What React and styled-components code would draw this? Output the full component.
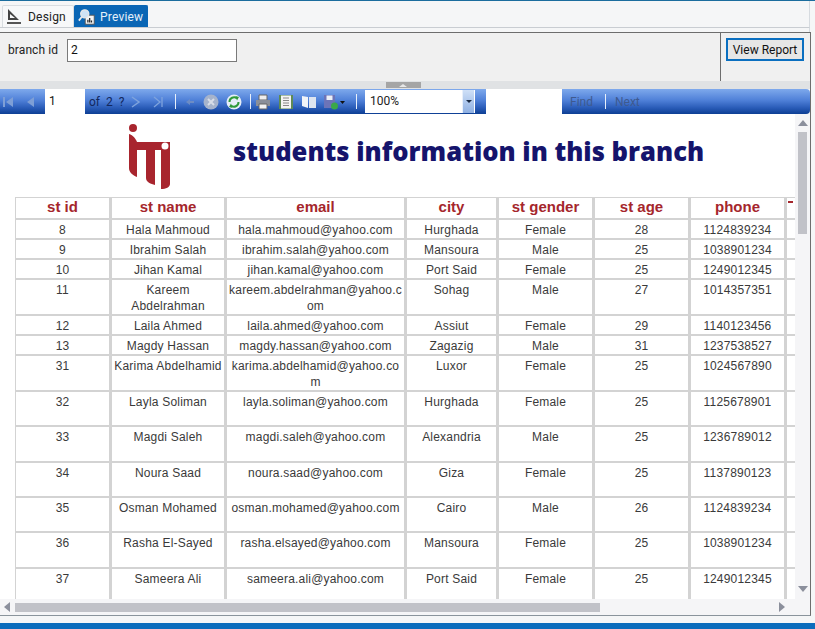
import React from "react";
import styled, { createGlobalStyle } from "styled-components";

const GlobalStyle = createGlobalStyle`
  html, body {
    margin: 0;
    padding: 0;
    background: #f5f6f7;
    overflow: hidden;
  }
`;

const columns = [95, 115, 180, 92, 96, 96, 96, 40];
const headers = ["st id", "st name", "email", "city", "st gender", "st age", "phone"];

const students = [
  { id: 8, name: "Hala Mahmoud", email: "hala.mahmoud@yahoo.com", city: "Hurghada", gender: "Female", age: 28, phone: "1124839234", h: 20 },
  { id: 9, name: "Ibrahim Salah", email: "ibrahim.salah@yahoo.com", city: "Mansoura", gender: "Male", age: 25, phone: "1038901234", h: 20 },
  { id: 10, name: "Jihan Kamal", email: "jihan.kamal@yahoo.com", city: "Port Said", gender: "Female", age: 25, phone: "1249012345", h: 20 },
  { id: 11, name: "Kareem Abdelrahman", email: "kareem.abdelrahman@yahoo.com", city: "Sohag", gender: "Male", age: 27, phone: "1014357351", h: 36 },
  { id: 12, name: "Laila Ahmed", email: "laila.ahmed@yahoo.com", city: "Assiut", gender: "Female", age: 29, phone: "1140123456", h: 20 },
  { id: 13, name: "Magdy Hassan", email: "magdy.hassan@yahoo.com", city: "Zagazig", gender: "Male", age: 31, phone: "1237538527", h: 20 },
  { id: 31, name: "Karima Abdelhamid", email: "karima.abdelhamid@yahoo.com", city: "Luxor", gender: "Female", age: 25, phone: "1024567890", h: 36 },
  { id: 32, name: "Layla Soliman", email: "layla.soliman@yahoo.com", city: "Hurghada", gender: "Female", age: 25, phone: "1125678901", h: 35 },
  { id: 33, name: "Magdi Saleh", email: "magdi.saleh@yahoo.com", city: "Alexandria", gender: "Male", age: 25, phone: "1236789012", h: 36 },
  { id: 34, name: "Noura Saad", email: "noura.saad@yahoo.com", city: "Giza", gender: "Female", age: 25, phone: "1137890123", h: 35 },
  { id: 35, name: "Osman Mohamed", email: "osman.mohamed@yahoo.com", city: "Cairo", gender: "Male", age: 26, phone: "1124839234", h: 35 },
  { id: 36, name: "Rasha El-Sayed", email: "rasha.elsayed@yahoo.com", city: "Mansoura", gender: "Female", age: 25, phone: "1038901234", h: 36 },
  { id: 37, name: "Sameera Ali", email: "sameera.ali@yahoo.com", city: "Port Said", gender: "Female", age: 25, phone: "1249012345", h: 36 },
];

const Page = styled.div`
  width: 815px;
  height: 629px;
  display: flex;
  flex-direction: column;
  overflow: hidden;
  background: #f5f6f7;
  font-family: Roboto, "Noto Sans", sans-serif;
  border-top: 1px solid #1b6d9e;
  box-sizing: border-box;
`;

const TabStrip = styled.div`
  height: 27px;
  width: 810px;
  flex: none;
  display: flex;
  align-items: flex-start;
  padding: 4px 0 0 2px;
  box-sizing: border-box;
  border-bottom: 1px solid #c9cdd2;
  border-right: 1px solid #d6dbe0;
`;

const Tab = styled.div`
  height: 22px;
  width: ${props => props.width}px;
  display: flex;
  align-items: center;
  gap: ${props => (props.active ? 4 : 6)}px;
  padding-left: 3px;
  box-sizing: border-box;
  font-size: 12px;
  letter-spacing: 0.2px;
  border-radius: 2px 2px 0 0;
  color: ${props => (props.active ? "#e4f0fa" : "#222")};
  background: ${props => (props.active ? "#0a66b5" : "#f7f8f9")};
  border: 1px solid ${props => (props.active ? "#0a66b5" : "#d9dde1")};
  border-bottom: none;
`;

const Gap = styled.div`
  height: 4px;
  width: 810px;
  flex: none;
  border-right: 1px solid #d6dbe0;
  box-sizing: border-box;
`;

const Frame = styled.div`
  width: 811px;
  height: 584px;
  flex: none;
  display: flex;
  flex-direction: column;
  border-top: 1px solid #6d6d6d;
  border-right: 1px solid #6d6d6d;
  border-bottom: 1px solid #8a949c;
  box-sizing: border-box;
`;

const ParamPanel = styled.div`
  height: 48px;
  flex: none;
  display: flex;
  background: #f0f0f0;
`;

const ParamFields = styled.div`
  flex: 1;
  display: flex;
  align-items: flex-start;
  gap: 9px;
  padding: 6px 0 0 8px;
`;

const ParamLabel = styled.span`
  font-size: 12px;
  letter-spacing: 0.1px;
  color: #222;
  line-height: 23px;
  width: 50px;
  white-space: nowrap;
`;

const ParamInput = styled.div`
  width: 170px;
  height: 23px;
  box-sizing: border-box;
  border: 1px solid #7a7a7a;
  background: #fff;
  font-size: 12px;
  color: #111;
  padding-left: 3px;
  line-height: 20px;
`;

const ParamAction = styled.div`
  width: 90px;
  flex: none;
  box-sizing: border-box;
  border-left: 1px solid #6d6d6d;
  padding: 5px 0 0 5px;
`;

const ViewButton = styled.button`
  width: 78px;
  height: 23px;
  padding: 0;
  box-sizing: border-box;
  border: 2px solid #0a6fc0;
  background: #e6e6e6;
  font-family: inherit;
  font-size: 12px;
  color: #111;
`;

const Splitter = styled.div`
  height: 8px;
  flex: none;
  background: #e0e2e4;
  display: flex;
  justify-content: center;
  box-sizing: border-box;
`;

const Grip = styled.div`
  width: 35px;
  height: 6px;
  margin: 1px 0 0 -4px;
  background: #a5a5a5;
  display: flex;
  justify-content: center;
  align-items: center;
  &::before {
    content: "";
    border-left: 4px solid transparent;
    border-right: 4px solid transparent;
    border-bottom: 3px solid #e8e8e8;
  }
`;

const Toolbar = styled.div`
  height: 25px;
  flex: none;
  display: flex;
  align-items: center;
  border-radius: 0 4px 4px 0;
  background: linear-gradient(#7ea9ec 0%, #4f80d8 45%, #2a5cb8 75%, #0d3f94 100%);
`;

const ToolIcon = styled.svg`
  width: ${props => props.w || 16}px;
  height: 16px;
  flex: none;
  margin-left: ${props => props.left || 0}px;
`;

const PageInput = styled.div`
  width: 40px;
  height: 25px;
  flex: none;
  margin-left: ${props => props.left || 0}px;
  box-sizing: border-box;
  background: #fff;
  font-size: 12px;
  line-height: 24px;
  padding-left: 4px;
  color: #111;
`;

const PageOf = styled.span`
  font-size: 12px;
  color: #12285e;
  margin-left: 4px;
  width: 41px;
  flex: none;
  word-spacing: 3px;
`;

const Divider = styled.div`
  width: 1px;
  height: 15px;
  flex: none;
  background: #e8f0fb;
  margin-left: ${props => props.left || 0}px;
`;

const ZoomBox = styled.div`
  width: 110px;
  height: 23px;
  flex: none;
  margin-left: 8px;
  display: flex;
  justify-content: space-between;
  background: #fff;
  box-sizing: border-box;
  font-size: 12px;
  line-height: 23px;
  color: #222;
  padding: 0 1px 0 5px;
`;

const ZoomArrow = styled.div`
  width: 11px;
  background: linear-gradient(#cfe0f7, #8fb0e2);
  border-left: 1px solid #e8f0fb;
  display: flex;
  align-items: center;
  justify-content: center;
  &::before {
    content: "";
    border-left: 3px solid transparent;
    border-right: 3px solid transparent;
    border-top: 3px solid #1a2a44;
  }
`;

const FindInput = styled.div`
  width: 76px;
  height: 25px;
  flex: none;
  margin-left: 11px;
  background: #fff;
`;

const FindLink = styled.span`
  font-size: 12px;
  color: #3f5a8f;
  margin-left: ${props => props.left || 0}px;
  flex: none;
`;

const ReportArea = styled.div`
  flex: 1;
  min-height: 0;
  display: grid;
  grid-template-columns: 795px 1fr;
  grid-template-rows: 1fr 16px;
  background: #fff;
`;

const ReportBody = styled.div`
  overflow: hidden;
  min-height: 0;
`;

const ReportHead = styled.div`
  height: 83px;
  display: flex;
  align-items: flex-start;
  padding: 9px 0 0 128px;
  box-sizing: border-box;
`;

const ReportTitle = styled.h1`
  margin: 9px 0 0 61px;
  font-family: "Open Sans", "Noto Sans", sans-serif;
  font-size: 25.6px;
  line-height: 40px;
  font-weight: 800;
  color: #15146c;
  white-space: nowrap;
`;

const TableClip = styled.div`
  margin-left: 15px;
  width: 780px;
  overflow: hidden;
`;

const StudentTable = styled.table`
  border-collapse: separate;
  border-spacing: 0;
  table-layout: fixed;
  width: 810px;
  font-family: "Liberation Sans", Arial, sans-serif;
`;

const HeadCell = styled.th`
  height: 23px;
  box-sizing: border-box;
  padding: 0;
  font-size: 15px;
  line-height: 18px;
  font-weight: 700;
  color: #a5262c;
  text-align: center;
  vertical-align: top;
  border-top: 1px solid #d3d3d3;
  border-left: 2px solid #d3d3d3;
  border-right: 1px solid #d3d3d3;
  border-bottom: 2px solid #d3d3d3;
  overflow: hidden;
  &:first-child {
    border-left-width: 1px;
  }
`;

const CutHeader = styled.th`
  height: 23px;
  box-sizing: border-box;
  padding: 3px 0 0 1px;
  vertical-align: top;
  text-align: left;
  border-top: 1px solid #d3d3d3;
  border-left: 2px solid #d3d3d3;
  border-bottom: 2px solid #d3d3d3;
  &::before {
    content: "";
    display: block;
    width: 5px;
    height: 2px;
    background: #a5262c;
  }
`;

const Cell = styled.td`
  box-sizing: border-box;
  padding: 2px 0 0;
  font-size: 12px;
  line-height: 16px;
  letter-spacing: 0.2px;
  color: #3a3a3a;
  text-align: center;
  vertical-align: top;
  overflow-wrap: anywhere;
  border-left: 2px solid #d3d3d3;
  border-right: 1px solid #d3d3d3;
  border-bottom: 2px solid #d3d3d3;
  &:first-child {
    border-left-width: 1px;
  }
`;

const VScroll = styled.div`
  background: #f5f5f7;
  display: flex;
  flex-direction: column;
  align-items: center;
  padding: 6px 0 7px;
  box-sizing: border-box;
  min-height: 0;
`;

const HScroll = styled.div`
  background: #f5f5f7;
  display: flex;
  align-items: center;
  grid-column: 1 / -1;
`;

const Arrow = styled.div`
  width: 0;
  height: 0;
  flex: none;
  border: 5px solid transparent;
  ${props => props.dir === "up" && "border-top: none; border-bottom: 6px solid #8b8f9c;"}
  ${props => props.dir === "down" && "border-bottom: none; border-top: 6px solid #8b8f9c; margin-top: auto;"}
  ${props => props.dir === "left" && "border-left: none; border-right: 6px solid #8b8f9c; margin-left: 4px;"}
  ${props => props.dir === "right" && "border-right: none; border-left: 6px solid #8b8f9c; margin-left: 179px;"}
`;

const VThumb = styled.div`
  width: 9px;
  height: 102px;
  margin-top: 6px;
  flex: none;
  background: #c1c2c8;
`;

const HThumb = styled.div`
  width: 585px;
  height: 9px;
  margin-left: 5px;
  background: #c1c2c8;
  flex: none;
`;

const BottomBar = styled.div`
  flex: 1;
  margin-top: 7px;
  background: #0b6cbc;
`;

const Row = ({ student }) => (
  <tr>
    <Cell style={{ height: student.h }}>{student.id}</Cell>
    <Cell>{student.name}</Cell>
    <Cell>{student.email}</Cell>
    <Cell>{student.city}</Cell>
    <Cell>{student.gender}</Cell>
    <Cell>{student.age}</Cell>
    <Cell>{student.phone}</Cell>
    <Cell />
  </tr>
);

const Logo = () => (
  <svg width="44" height="66" viewBox="128 123 44 66">
    <circle cx="133" cy="128" r="4" fill="#a8252e" />
    <path d="M129 134 C133 135 136 139 137 142 H170 V184 C170 187 166 189 161 189 V150 H155 V185 C151 184 146 182 146 178 V150 H137 V177 C132 175 129 172 129 168 Z" fill="#a8252e" />
    <circle cx="165" cy="146" r="3.5" fill="#fff" />
  </svg>
);

const DesignIcon = () => (
  <svg width="16" height="17" viewBox="0 0 16 17">
    <path d="M2 1 L2 12 L13 12 Z M4 6 L4 10 L9 10 Z" fill="#444" fillRule="evenodd" />
    <path d="M1 14 H15 V16 H1 Z" fill="#555" />
  </svg>
);

const PreviewIcon = () => (
  <svg width="18" height="18" viewBox="0 0 20 20">
    <rect x="8" y="8" width="10" height="10" fill="#f5f5f5" stroke="#555" />
    <path d="M11 16 V13 M13 16 V11 M15 16 V14" stroke="#222" strokeWidth="1.4" />
    <circle cx="7.5" cy="6.5" r="4.5" fill="#cfe3f5" stroke="#e8e8e8" strokeWidth="1.5" />
    <path d="M4 10 L1 14" stroke="#eee" strokeWidth="2" />
  </svg>
);

const First = () => (
  <ToolIcon w={12} left={2} viewBox="0 0 12 16">
    <path d="M1 3 H3 V13 H1 Z M11 3 V13 L4 8 Z" fill="#7e9fd6" />
  </ToolIcon>
);

const Prev = () => (
  <ToolIcon w={12} left={10} viewBox="0 0 12 16">
    <path d="M10 3 V13 L3 8 Z" fill="#7e9fd6" />
  </ToolIcon>
);

const Next = () => (
  <ToolIcon w={12} viewBox="0 0 12 16">
    <path d="M2 3 L9 8 L2 13" fill="none" stroke="#7ea3dd" strokeWidth="1.5" />
  </ToolIcon>
);

const Last = () => (
  <ToolIcon w={12} left={10} viewBox="0 0 12 16">
    <path d="M2 3 L8 8 L2 13 M10 3 V13" fill="none" stroke="#7ea3dd" strokeWidth="1.3" />
  </ToolIcon>
);

const BackIcon = () => (
  <ToolIcon w={10} left={9} viewBox="0 0 10 16">
    <path d="M1 8 L5 5 V7 H9 V9 H5 V11 Z" fill="#6d8cc4" />
  </ToolIcon>
);

const StopIcon = () => (
  <ToolIcon left={8} viewBox="0 0 16 16">
    <circle cx="8" cy="8" r="7.5" fill="#a5b3cc" />
    <path d="M5 5 L11 11 M11 5 L5 11" stroke="#d8dee8" strokeWidth="2" />
  </ToolIcon>
);

const RefreshIcon = () => (
  <ToolIcon left={7} viewBox="0 0 16 16">
    <circle cx="8" cy="8" r="7.5" fill="#e6eef8" />
    <path d="M3.5 8 A4.5 4.5 0 0 1 11 4.5 M12.5 8 A4.5 4.5 0 0 1 5 11.5" fill="none" stroke="#2f9a3a" strokeWidth="2" />
    <path d="M9.5 2 L13 3 L11 6.5 Z M6.5 14 L3 13 L5 9.5 Z" fill="#2f9a3a" />
  </ToolIcon>
);

const PrintIcon = () => (
  <ToolIcon left={4} viewBox="0 0 16 16">
    <path d="M4 1 H12 V6 H4 Z" fill="#eee" stroke="#666" />
    <path d="M1 6 H15 V12 H1 Z" fill="#8a8f99" />
    <path d="M4 10 H12 V15 H4 Z" fill="#f2f2f2" stroke="#666" />
  </ToolIcon>
);

const LayoutIcon = () => (
  <ToolIcon left={7} viewBox="0 0 16 16">
    <rect x="1" y="1" width="14" height="14" fill="#5f8a55" />
    <rect x="3" y="1.5" width="10" height="13" fill="#f3f3f3" />
    <path d="M5 4 H11 M5 6.5 H11 M5 9 H11 M5 11.5 H11" stroke="#888" />
  </ToolIcon>
);

const SetupIcon = () => (
  <ToolIcon left={7} viewBox="0 0 16 16">
    <path d="M1 2 L7 3 V14 L1 12 Z" fill="#f2f4f8" />
    <path d="M8 3 H15 V14 H8 Z" fill="#dde4f0" />
  </ToolIcon>
);

const ExportIcon = () => (
  <ToolIcon w={22} left={6} viewBox="0 0 22 16">
    <path d="M1 1 H12 V14 H1 Z" fill="#6c74b8" />
    <path d="M3.5 1.5 H9.5 V6 H3.5 Z" fill="#eceff6" />
    <circle cx="11.5" cy="12" r="3.5" fill="#3aa84a" />
    <path d="M17 7 H22 L19.500 10 Z" fill="#111" />
  </ToolIcon>
);

const App = () => (
  <Page>
    <GlobalStyle />
    <TabStrip>
      <Tab width={72}>
        <DesignIcon />
        Design
      </Tab>
      <Tab active width={74}>
        <PreviewIcon />
        Preview
      </Tab>
    </TabStrip>
    <Gap />
    <Frame>
      <ParamPanel>
        <ParamFields>
          <ParamLabel>branch id</ParamLabel>
          <ParamInput>2</ParamInput>
        </ParamFields>
        <ParamAction>
          <ViewButton>View Report</ViewButton>
        </ParamAction>
      </ParamPanel>
      <Splitter>
        <Grip />
      </Splitter>
      <Toolbar>
        <First />
        <Prev />
        <PageInput left={9}>1</PageInput>
        <PageOf>of 2 ?</PageOf>
        <Next />
        <Last />
        <Divider left={11} />
        <BackIcon />
        <StopIcon />
        <RefreshIcon />
        <Divider left={8} />
        <PrintIcon />
        <LayoutIcon />
        <SetupIcon />
        <ExportIcon />
        <Divider left={11} />
        <ZoomBox>
          100%
          <ZoomArrow />
        </ZoomBox>
        <FindInput />
        <FindLink left={8}>Find</FindLink>
        <Divider left={12} />
        <FindLink left={9}>Next</FindLink>
      </Toolbar>
      <ReportArea>
        <ReportBody>
          <ReportHead>
            <Logo />
            <ReportTitle>students information in this branch</ReportTitle>
          </ReportHead>
          <TableClip>
            <StudentTable>
              <colgroup>
                {columns.map((width, index) => (
                  <col key={index} style={{ width }} />
                ))}
              </colgroup>
              <thead>
                <tr>
                  {headers.map(header => (
                    <HeadCell key={header}>{header}</HeadCell>
                  ))}
                  <CutHeader />
                </tr>
              </thead>
              <tbody>
                {students.map(student => (
                  <Row key={student.id} student={student} />
                ))}
              </tbody>
            </StudentTable>
          </TableClip>
        </ReportBody>
        <VScroll>
          <Arrow dir="up" />
          <VThumb />
          <Arrow dir="down" />
        </VScroll>
        <HScroll>
          <Arrow dir="left" />
          <HThumb />
          <Arrow dir="right" />
        </HScroll>
      </ReportArea>
    </Frame>
    <BottomBar />
  </Page>
);

export default App;
